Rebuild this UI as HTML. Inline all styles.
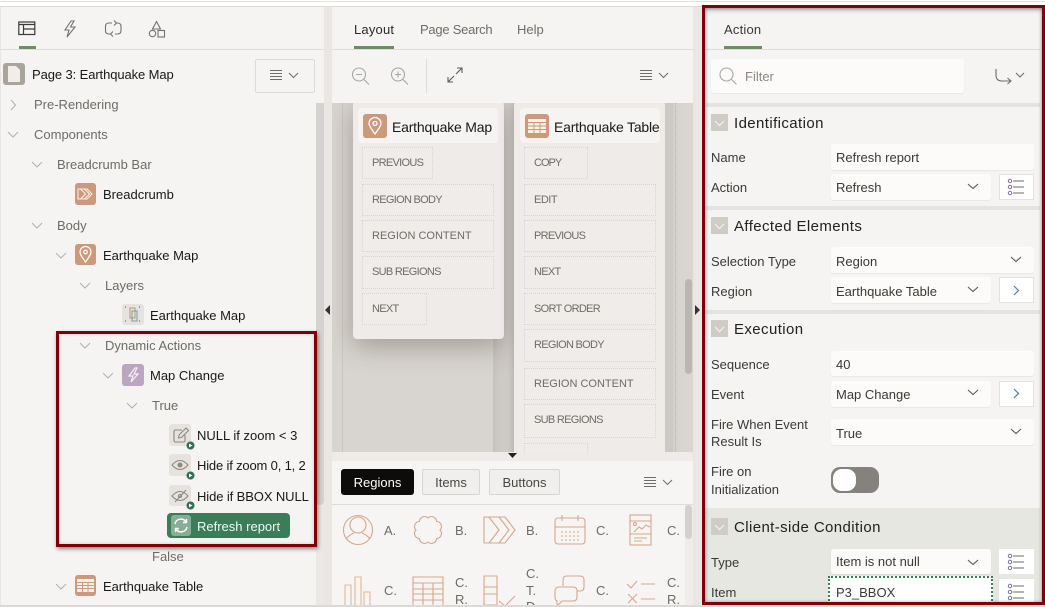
<!DOCTYPE html>
<html><head><meta charset="utf-8">
<style>
html,body{margin:0;padding:0;width:1045px;height:607px;overflow:hidden}
body{position:relative;background:#e9e6e3;font-family:"Liberation Sans",sans-serif;font-size:13px;color:#1a1816}
div,span,svg{position:absolute;box-sizing:border-box}
#w{left:0;top:0;width:1045px;height:607px;overflow:hidden}
.t{white-space:nowrap;line-height:18px;height:18px;letter-spacing:0}
.g{color:#6f6b66}
.l{color:#3c3935}
.slot{border:1px dotted #d8d4cf;font-size:11px;color:#6f6b66;line-height:31px;padding-left:9px;white-space:nowrap;background:#efecE9;letter-spacing:-.7px}
.f{background:#fcfbf9;border-radius:3px;box-shadow:0 1px 1px rgba(0,0,0,.06);color:#3c3935;line-height:28px;padding-left:5px;white-space:nowrap;letter-spacing:0}
.b{background:#fff;border:1px solid #e4e2de}
.sep{left:705px;width:335px;height:4px;background:#e5e3df}
.h{left:734px;font-size:15px;color:#23211e;letter-spacing:.4px}
.ic{border-radius:3px}
svg{overflow:visible}
</style></head><body><div id="w">
<div style="left:0;top:0;width:1045px;height:7px;background:#fff;border-bottom:1px solid #dcdad7"></div>
<div style="left:0;top:1px;width:1045px;height:1px;background:#e3e1de"></div>

<!-- LEFT PANEL -->
<div style="left:1px;top:7px;width:323px;height:600px;background:#f5f4f2"></div>
<div style="left:1px;top:49px;width:323px;height:1px;background:#dfddda"></div>
<div style="left:19px;top:46px;width:17px;height:3px;background:#6b8f5f"></div>
<svg style="left:18px;top:21px" width="18" height="15" fill="none" stroke="#3d3a37" stroke-width="1.2"><rect x=".8" y="1" width="16" height="12.5"/><path d="M.8 3.5H17M5.5 3.5V13.5M5.5 8H17"/></svg>
<svg style="left:62px;top:20px" width="16" height="18" fill="none" stroke="#75716c" stroke-width="1.1"><path d="M9 1 3 10h4l-2 7 8-10H8.5L12 1z"/></svg>
<svg style="left:104px;top:20px" width="19" height="18" fill="none" stroke="#75716c" stroke-width="1.1"><path d="M8 3H5Q1.500 3 1.500 6.500v4Q1.500 14 5 14h1M11 14h2.500Q17 14 17 10.500v-4Q17 3 13.500 3H13M10 .5 12.500 3 10 5.500M9 11.500 6.500 14 9 16.500"/></svg>
<svg style="left:148px;top:20px" width="18" height="18" fill="none" stroke="#75716c" stroke-width="1.1"><path d="M8.500 1.500 12.500 9h-8z"/><circle cx="4.500" cy="13.500" r="3.200"/><rect x="10" y="10.500" width="6.500" height="6.500"/></svg>

<div class="ic" style="left:3px;top:63px;width:22px;height:22px;background:#aaa49c"><svg style="left:5px;top:3px" width="13" height="16"><path d="M0 0h8l4 4v12H0z" fill="#f0eee9"/></svg></div>
<div class="t" style="left:32px;top:66px;letter-spacing:-.1px">Page 3: Earthquake Map</div>
<div style="left:255px;top:59px;width:60px;height:34px;border:1px solid #dcdad7;border-radius:2px"></div>
<svg style="left:270px;top:69px" width="30" height="14" fill="none" stroke="#6f6b66"><path d="M0 1.500h12M0 4.500h12M0 7.500h12M0 10.500h12"/><path d="M19 4l4.500 4.500L28 4"/></svg>
<div style="left:316px;top:103px;width:8px;height:504px;background:#ebe9e6"></div>
<div style="left:316px;top:103px;width:8px;height:402px;background:#d5d3d0;border-radius:0 0 4px 4px"></div>

<svg style="left:0;top:0;width:330px;height:607px" fill="none" stroke="#b3b0ab" stroke-width="1">
<path d="M11 100l4.500 5-4.500 5"/>
<path d="M8 132l5 5 5-5M32 162l5 5 5-5M32 223l5 5 5-5M56 253l5 5 5-5M80 283l5 5 5-5M80 343l5 5 5-5M103 373l5 5 5-5M127 403l5 5 5-5M56 584l5 5 5-5"/>
</svg>
<div class="t g" style="left:34px;top:96px">Pre-Rendering</div>
<div class="t g" style="left:34px;top:126px">Components</div>
<div class="t g" style="left:57px;top:156px">Breadcrumb Bar</div>
<div class="ic" style="left:75px;top:183px;width:21px;height:22px;background:#cc997b"><svg style="left:2px;top:5px" width="18" height="12" fill="none" stroke="#f6efe9" stroke-width="1.100"><path d="M1 1h9l5 5-5 5H1zM3.500 1l5 5-5 5M7.500 1l5 5-5 5"/></svg></div>
<div class="t" style="left:103px;top:186px">Breadcrumb</div>
<div class="t g" style="left:57px;top:217px">Body</div>
<div class="ic" style="left:75px;top:244px;width:21px;height:21px;background:#cc997b"><svg style="left:4px;top:2px" width="13" height="17" fill="none" stroke="#fff" stroke-width="1.200"><path d="M6.500 16C3 11 1 8.500 1 6a5.500 5.500 0 0 1 11 0c0 2.500-2 5-5.500 10z"/><circle cx="6.500" cy="6" r="1.800"/></svg></div>
<div class="t" style="left:103px;top:247px">Earthquake Map</div>
<div class="t g" style="left:105px;top:277px">Layers</div>
<div class="ic" style="left:122px;top:304px;width:22px;height:21px;background:#e6e3df"><svg style="left:3px;top:3px" width="16" height="15" fill="none" stroke="#8d8880"><rect x="5" y="1" width="5" height="10" stroke="#b89a6d"/><rect x="7" y="4" width="5" height="10" stroke="#7f98a8"/><path d="M0 0h2M14 0h2M0 14h2M14 14h2" stroke="#555" stroke-dasharray="1 1"/></svg></div>
<div class="t" style="left:150px;top:307px">Earthquake Map</div>
<div class="t g" style="left:105px;top:337px">Dynamic Actions</div>
<div class="ic" style="left:122px;top:364px;width:22px;height:22px;background:#bba6c2"><svg style="left:5px;top:3px" width="13" height="16" fill="none" stroke="#f4f0f5" stroke-width="1.200"><path d="M8 1 2 9h4l-2 6 7-8H7l3-6z"/></svg></div>
<div class="t" style="left:150px;top:367px">Map Change</div>
<div class="t g" style="left:152px;top:397px">True</div>

<div class="ic" style="left:169px;top:424px;width:22px;height:22px;background:#e6e3df"><svg style="left:4px;top:3px" width="16" height="16" fill="none" stroke="#8d8880" stroke-width="1.100"><path d="M9 3H2.500Q1 3 1 4.500v9Q1 15 2.500 15h8q1.500 0 1.500-1.500V8M5.500 11l.5-3 7-7 2.500 2.500-7 7z"/></svg></div>
<div class="t" style="left:197px;top:427px">NULL if zoom &lt; 3</div>
<div class="ic" style="left:169px;top:454px;width:22px;height:22px;background:#e6e3df"><svg style="left:2px;top:5px" width="18" height="12" fill="none" stroke="#8d8880" stroke-width="1.100"><path d="M1 6q8-9 16 0-8 9-16 0z"/><circle cx="9" cy="6" r="2" fill="#8d8880"/></svg></div>
<div class="t" style="left:197px;top:457px;letter-spacing:-.17px">Hide if zoom 0, 1, 2</div>
<div class="ic" style="left:169px;top:485px;width:22px;height:21px;background:#e6e3df"><svg style="left:2px;top:4px" width="18" height="13" fill="none" stroke="#8d8880" stroke-width="1.100"><path d="M1 7q8-9 16 0-8 9-16 0zM4 13 15 1"/><circle cx="9" cy="7" r="1.500"/></svg></div>
<div class="t" style="left:197px;top:488px;letter-spacing:-.1px">Hide if BBOX NULL</div>
<svg style="left:186px;top:441px" width="10" height="70"><g fill="#2f7050"><circle cx="4.500" cy="4.500" r="4"/><circle cx="4.500" cy="34.500" r="4"/><circle cx="4.500" cy="64.500" r="4"/></g><g fill="#fff"><path d="M3 2.500l3.500 2-3.500 2zM3 32.500l3.500 2-3.500 2zM3 62.500l3.500 2-3.500 2z"/></g></svg>

<div style="left:167px;top:513px;width:123px;height:25px;background:#3b7d58;border-radius:4px"></div>
<div class="ic" style="left:171px;top:515px;width:20px;height:21px;background:#87ae92"><svg style="left:2px;top:3px" width="16" height="15" fill="none" stroke="#fff" stroke-width="1.400"><path d="M2 6a6 6 0 0 1 11-2M14 9a6 6 0 0 1-11 2M13.500 1v3.500H10M2.500 14v-3.500H6"/></svg></div>
<div class="t" style="left:197px;top:518px;color:#f3f6f2">Refresh report</div>
<div class="t g" style="left:152px;top:548px">False</div>
<div class="ic" style="left:75px;top:575px;width:21px;height:21px;background:#cc997b"><svg style="left:2px;top:4px" width="17" height="13"><rect width="17" height="13" fill="#fbeee4"/><path d="M0 3.500h17M0 6.500h17M0 9.500h17M5.500 3v10M11 3v10" stroke="#cc997b"/></svg></div>
<div class="t" style="left:103px;top:578px;letter-spacing:-.05px">Earthquake Table</div>

<!-- red box left -->
<div style="left:56px;top:331px;width:261px;height:216px;border:3px solid #7f0000;box-shadow:1px 2px 4px rgba(0,0,0,.45),inset 0 0 3px rgba(0,0,0,.2)"></div>

<!-- Splitter glyphs -->
<svg style="left:325px;top:305px" width="6" height="10"><path d="M5 0v10L0 5z" fill="#333"/></svg>
<svg style="left:695px;top:305px" width="6" height="10"><path d="M0 0v10l5-5z" fill="#333"/></svg>

<!-- MIDDLE -->
<div style="left:332px;top:7px;width:361px;height:96px;background:#f5f4f2"></div>
<div style="left:332px;top:49px;width:361px;height:1px;background:#dfddda"></div>
<div style="left:354px;top:46px;width:40px;height:3px;background:#6b8f5f"></div>
<div class="t" style="left:354px;top:21px;color:#2b2926;letter-spacing:.2px">Layout</div>
<div class="t g" style="left:420px;top:21px;letter-spacing:-.25px">Page Search</div>
<div class="t g" style="left:517px;top:21px">Help</div>
<svg style="left:351px;top:67px" width="19" height="18" fill="none" stroke="#a9a6a1" stroke-width="1.100"><circle cx="8" cy="7.500" r="6.500"/><path d="M5 7.500h6M13 12.500l5 5"/></svg>
<svg style="left:390px;top:67px" width="19" height="18" fill="none" stroke="#a9a6a1" stroke-width="1.100"><circle cx="8" cy="7.500" r="6.500"/><path d="M5 7.500h6M8 4.500v6M13 12.500l5 5"/></svg>
<div style="left:426px;top:59px;width:1px;height:34px;background:#dfddda"></div>
<svg style="left:447px;top:67px" width="16" height="16" fill="none" stroke="#5f5b56" stroke-width="1.100"><path d="M9 7l6-6M10 1h5v5M1 15l6-6M1 10v5h5"/></svg>
<svg style="left:640px;top:69px" width="30" height="14" fill="none" stroke="#6f6b66"><path d="M0 1.500h12M0 4.500h12M0 7.500h12M0 10.500h12"/><path d="M19 4l4.500 4.500L28 4"/></svg>

<div style="left:332px;top:103px;width:361px;height:349px;background:#d8d4cf;overflow:hidden">
 <div style="left:10px;top:0;width:1px;height:349px;background:#c9c5c0"></div>
 <div style="left:343px;top:0;width:1px;height:349px;border-left:1px dotted #bdb9b4"></div>
 <div style="left:161px;top:0;width:32px;height:349px;background:linear-gradient(90deg,#c6c2bd,#d5d1cc 45%,#d5d1cc 55%,#c4c0bb)"></div>
 <div style="left:21px;top:-2px;width:151px;height:238px;background:#eeebe8;border-radius:4px;box-shadow:0 8px 26px rgba(80,70,60,.38)"></div>
 <div style="left:182px;top:-2px;width:151px;height:360px;background:#eeebe8;border-radius:4px;box-shadow:0 0 14px rgba(80,70,60,.3)"></div>
 <div style="left:333px;top:0;width:8px;height:349px;background:#cdc9c4"></div>
</div>
<div style="left:685px;top:103px;width:8px;height:349px;background:#d9d6d2"></div>
<div style="left:685px;top:279px;width:7px;height:95px;background:#bab6b1;border-radius:4px"></div>

<div style="left:358px;top:108px;width:140px;height:35px;background:#f6f4f2;border-radius:4px"></div>
<div class="ic" style="left:363px;top:114px;width:24px;height:24px;background:#cc997b"><svg style="left:5px;top:3px" width="14" height="18" fill="none" stroke="#fff" stroke-width="1.300"><path d="M7 17C3.500 12 1 9 1 6.500a6 6 0 0 1 12 0C13 9 10.500 12 7 17z"/><circle cx="7" cy="6.500" r="2"/></svg></div>
<div class="t" style="left:392px;top:118px;font-size:14px;letter-spacing:-.2px">Earthquake Map</div>
<div style="left:520px;top:108px;width:140px;height:35px;background:#f6f4f2;border-radius:4px"></div>
<div class="ic" style="left:525px;top:114px;width:24px;height:24px;background:#cc997b"><svg style="left:3px;top:5px" width="18" height="14"><rect width="18" height="14" fill="#fbeee4"/><path d="M0 3.500h18M0 7h18M0 10.500h18M6 3v11M12 3v11" stroke="#cc997b"/></svg></div>
<div class="t" style="left:554px;top:118px;font-size:14px;letter-spacing:-.2px">Earthquake Table</div>

<div class="slot" style="left:362px;top:147px;width:71px;height:32px">PREVIOUS</div>
<div class="slot" style="left:362px;top:184px;width:132px;height:32px">REGION BODY</div>
<div class="slot" style="left:362px;top:220px;width:132px;height:32px;letter-spacing:0">REGION CONTENT</div>
<div class="slot" style="left:362px;top:256px;width:132px;height:33px">SUB REGIONS</div>
<div class="slot" style="left:362px;top:293px;width:65px;height:32px">NEXT</div>
<div class="slot" style="left:524px;top:147px;width:64px;height:32px;letter-spacing:-1px">COPY</div>
<div class="slot" style="left:524px;top:184px;width:132px;height:32px;letter-spacing:-.5px">EDIT</div>
<div class="slot" style="left:524px;top:220px;width:132px;height:32px">PREVIOUS</div>
<div class="slot" style="left:524px;top:256px;width:132px;height:33px">NEXT</div>
<div class="slot" style="left:524px;top:293px;width:132px;height:32px">SORT ORDER</div>
<div class="slot" style="left:524px;top:329px;width:132px;height:33px">REGION BODY</div>
<div class="slot" style="left:524px;top:368px;width:132px;height:32px;letter-spacing:0">REGION CONTENT</div>
<div class="slot" style="left:524px;top:404px;width:132px;height:34px">SUB REGIONS</div>
<div class="slot" style="left:524px;top:443px;width:64px;height:9px;border-bottom:0"></div>

<div style="left:332px;top:452px;width:361px;height:9px;background:#eeebe8"></div>
<svg style="left:508px;top:453px" width="10" height="6"><path d="M0 0h9L4.500 5z" fill="#222"/></svg>

<!-- palette -->
<div style="left:332px;top:461px;width:361px;height:146px;background:#f6f5f3"></div>
<div style="left:332px;top:504px;width:361px;height:1px;background:#dfddda"></div>
<div style="left:341px;top:469px;width:73px;height:26px;background:#0e0c0a;border-radius:3px;color:#fff;text-align:center;line-height:28px">Regions</div>
<div style="left:422px;top:469px;width:58px;height:26px;background:#f1efed;border:1px solid #d8d6d2;border-radius:2px;color:#4a4743;text-align:center;line-height:26px">Items</div>
<div style="left:489px;top:469px;width:71px;height:26px;background:#f1efed;border:1px solid #d8d6d2;border-radius:2px;color:#4a4743;text-align:center;line-height:26px">Buttons</div>
<svg style="left:644px;top:476px" width="30" height="14" fill="none" stroke="#6f6b66"><path d="M0 1.500h12M0 4.500h12M0 7.500h12M0 10.500h12"/><path d="M19 4l4.500 4.500L28 4"/></svg>
<div style="left:685px;top:505px;width:8px;height:102px;background:#efedea"></div>
<div style="left:685px;top:505px;width:7px;height:34px;background:#d3d1ce;border-radius:4px"></div>

<svg style="left:332px;top:505px;width:360px;height:102px" fill="none" stroke="#d6a68c" stroke-width="1.100">
<circle cx="26" cy="25" r="14.500"/><circle cx="26" cy="20" r="8"/><path d="M14 34q3-4 8-6M38 34q-3-4-8-6"/>
<path d="M108 25A5 5 0 0 1 104.500 33.500A5 5 0 0 1 96 37A5 5 0 0 1 87.500 33.500A5 5 0 0 1 84 25A5 5 0 0 1 87.500 16.500A5 5 0 0 1 96 13A5 5 0 0 1 104.500 16.500A5 5 0 0 1 108 25z"/>
<path d="M152 12h21l10 13-10 13h-21zM157 12l10 13-10 13M167 12l10 13-10 13"/>
<rect x="223" y="13" width="30" height="26" rx="3"/><path d="M223 22h30M230 10v6M246 10v6"/><path d="M229 27h18M229 31h18M229 35h18" stroke-dasharray="2 2"/>
<g transform="translate(8 -1)"><rect x="290" y="11" width="21" height="30"/><path d="M290 17h21M290 30h21M294 34h13M294 37h8"/><circle cx="295" cy="20" r="1.500"/><path d="M294 28l5-5 3 2 4-4 4 2"/></g>
<path d="M13 100V80h6v20M23 100V72h6v28M32 100V87h6v13M10 100.500h30" stroke="#e3b796"/>
<path d="M81 72h30v29H81zM81 78h30M81 84h30M81 89h30M81 95h30M91 78v23M101 78v23"/>
<path d="M152 71h13v29h-13zM152 82h13M152 89h13"/><path d="M167 96l6 5 10-10"/>
<path d="M231 81v-6q0-4 4-4h13q4 0 4 4v7q0 4-4 4h-3"/><path d="M227 82h14q4 0 4 4v6q0 4-4 4h-11l-5 5v-5q-2-1-2-4v-6q0-4 4-4z"/>
<path d="M295 79l4 4 6-7M309 79h14M296 89l9 9M305 89l-9 9M309 94h14"/>
</svg>
<div class="t g" style="left:384px;top:522px">A.</div>
<div class="t g" style="left:455px;top:522px">B.</div>
<div class="t g" style="left:526px;top:522px">B.</div>
<div class="t g" style="left:596px;top:522px">C.</div>
<div class="t g" style="left:667px;top:522px">C.</div>
<div class="t g" style="left:384px;top:582px">C.</div>
<div class="t g" style="left:455px;top:574px">C.</div>
<div class="t g" style="left:455px;top:591px">R.</div>
<div class="t g" style="left:526px;top:565px">C.</div>
<div class="t g" style="left:526px;top:582px">T.</div>
<div class="t g" style="left:526px;top:598px">D.</div>
<div class="t g" style="left:596px;top:582px">C.</div>
<div class="t g" style="left:667px;top:574px">C.</div>
<div class="t g" style="left:667px;top:591px">R.</div>

<!-- RIGHT -->
<div style="left:702px;top:5px;width:343px;height:602px;background:#f5f4f2"></div>
<div style="left:705px;top:49px;width:335px;height:1px;background:#dfddda"></div>
<div style="left:724px;top:46px;width:38px;height:3px;background:#6b8f5f"></div>
<div class="t l" style="left:724px;top:21px;letter-spacing:.2px">Action</div>
<div class="f" style="left:711px;top:59px;width:253px;height:34px"></div>
<svg style="left:719px;top:67px" width="19" height="18" fill="none" stroke="#a9a6a1" stroke-width="1.100"><circle cx="7.500" cy="7.500" r="6.500"/><path d="M12.500 12.500l5 5"/></svg>
<div class="t" style="left:745px;top:68px;color:#8c8883">Filter</div>
<svg style="left:995px;top:68px" width="32" height="16" fill="none" stroke="#6f6b66" stroke-width="1.100"><path d="M1 1v6q0 6 6 6h9M12.500 10l3.500 3-3.500 3"/><path d="M21 5l4 4 4-4"/></svg>

<div class="sep" style="top:103px"></div>
<div class="sep" style="top:206px"></div>
<div class="sep" style="top:310px"></div>
<div style="left:705px;top:508px;width:335px;height:99px;background:#e5e7e0"></div>

<svg style="left:711px;top:114px;width:17px;height:17px;background:#cfccc6" fill="none" stroke="#f3f2ef" stroke-width="1.200"><path d="M4 7l4.500 4.500L13 7"/></svg>
<svg style="left:711px;top:217px;width:17px;height:17px;background:#cfccc6" fill="none" stroke="#f3f2ef" stroke-width="1.200"><path d="M4 7l4.500 4.500L13 7"/></svg>
<svg style="left:711px;top:320px;width:17px;height:17px;background:#cfccc6" fill="none" stroke="#f3f2ef" stroke-width="1.200"><path d="M4 7l4.500 4.500L13 7"/></svg>
<svg style="left:711px;top:518px;width:17px;height:17px;background:#cfccc6" fill="none" stroke="#f3f2ef" stroke-width="1.200"><path d="M4 7l4.500 4.500L13 7"/></svg>
<div class="t h" style="top:115px">Identification</div>
<div class="t h" style="top:218px">Affected Elements</div>
<div class="t h" style="top:321px">Execution</div>
<div class="t h" style="top:519px">Client-side Condition</div>

<div class="t l" style="left:711px;top:149px">Name</div>
<div class="t l" style="left:711px;top:179px">Action</div>
<div class="t l" style="left:711px;top:253px">Selection Type</div>
<div class="t l" style="left:711px;top:283px">Region</div>
<div class="t l" style="left:711px;top:356px">Sequence</div>
<div class="t l" style="left:711px;top:386px">Event</div>
<div class="t l" style="left:711px;top:416px">Fire When Event</div>
<div class="t l" style="left:711px;top:433px">Result Is</div>
<div class="t l" style="left:711px;top:463px">Fire on</div>
<div class="t l" style="left:711px;top:481px">Initialization</div>
<div class="t l" style="left:711px;top:554px">Type</div>
<div class="t l" style="left:711px;top:584px">Item</div>

<div class="f" style="left:831px;top:144px;width:203px;height:26px">Refresh report</div>
<div class="f" style="left:831px;top:174px;width:160px;height:26px">Refresh</div>
<div class="f" style="left:831px;top:247px;width:203px;height:26px;line-height:30px">Region</div>
<div class="f" style="left:831px;top:277px;width:160px;height:26px;line-height:30px">Earthquake Table</div>
<div class="f" style="left:831px;top:351px;width:203px;height:25px;line-height:27px">40</div>
<div class="f" style="left:831px;top:381px;width:160px;height:26px">Map Change</div>
<div class="f" style="left:831px;top:419px;width:203px;height:26px;line-height:30px">True</div>
<div class="f" style="left:831px;top:549px;width:160px;height:25px;line-height:25px">Item is not null</div>
<div class="f" style="left:828px;top:576px;width:165px;height:29px;background:#fff;border:2px dotted #3b7d58;border-bottom:0;padding-left:6px;line-height:29px;border-radius:0">P3_BBOX</div>

<svg style="left:0;top:0;width:1045px;height:607px" fill="none" stroke="#5c5853" stroke-width="1.100">
<path d="M968 184l5 4.500 5-4.500M1011 257l5 4.500 5-4.500M968 287l5 4.500 5-4.500M968 390l5 4.500 5-4.500M1011 429l5 4.500 5-4.500M968 560l5 4.500 5-4.500"/>
</svg>
<div class="b" style="left:999px;top:174px;width:35px;height:26px"></div>
<div class="b" style="left:999px;top:277px;width:35px;height:26px"></div>
<div class="b" style="left:999px;top:381px;width:35px;height:26px"></div>
<div class="b" style="left:999px;top:549px;width:35px;height:25px;border:0"></div>
<div class="b" style="left:999px;top:579px;width:35px;height:26px;border:0"></div>
<svg style="left:0;top:0;width:1045px;height:607px" fill="none">
<g stroke="#6f6b66" stroke-width="1.100"><path d="M1013 181h11M1013 187h11M1013 193h11M1013 556h11M1013 562h11M1013 568h11M1013 586h11M1013 592h11M1013 598h11"/></g>
<g stroke="#7f6f9a"><circle cx="1010" cy="181" r="1.700"/><circle cx="1010" cy="187" r="1.700"/><circle cx="1010" cy="193" r="1.700"/><circle cx="1010" cy="556" r="1.700"/><circle cx="1010" cy="562" r="1.700"/><circle cx="1010" cy="568" r="1.700"/><circle cx="1010" cy="586" r="1.700"/><circle cx="1010" cy="592" r="1.700"/><circle cx="1010" cy="598" r="1.700"/></g>
<path d="M1014 286l4.500 4.500-4.500 4.500M1014 389l4.500 4.500-4.500 4.500" stroke="#5f7f9a" stroke-width="1.200"/>
</svg>
<div style="left:831px;top:467px;width:48px;height:26px;background:#85817c;border-radius:9px"></div>
<div style="left:833px;top:469px;width:23px;height:22px;background:#fff;border-radius:9px"></div>

<!-- red box right -->
<div style="left:702px;top:5px;width:343px;height:600px;border:3px solid #7f0000;box-shadow:inset 0 2px 4px rgba(0,0,0,.3),inset 0 0 3px rgba(0,0,0,.25)"></div>
<div style="left:0;top:605px;width:1045px;height:2px;background:#dcdad7"></div>
</div></body></html>
